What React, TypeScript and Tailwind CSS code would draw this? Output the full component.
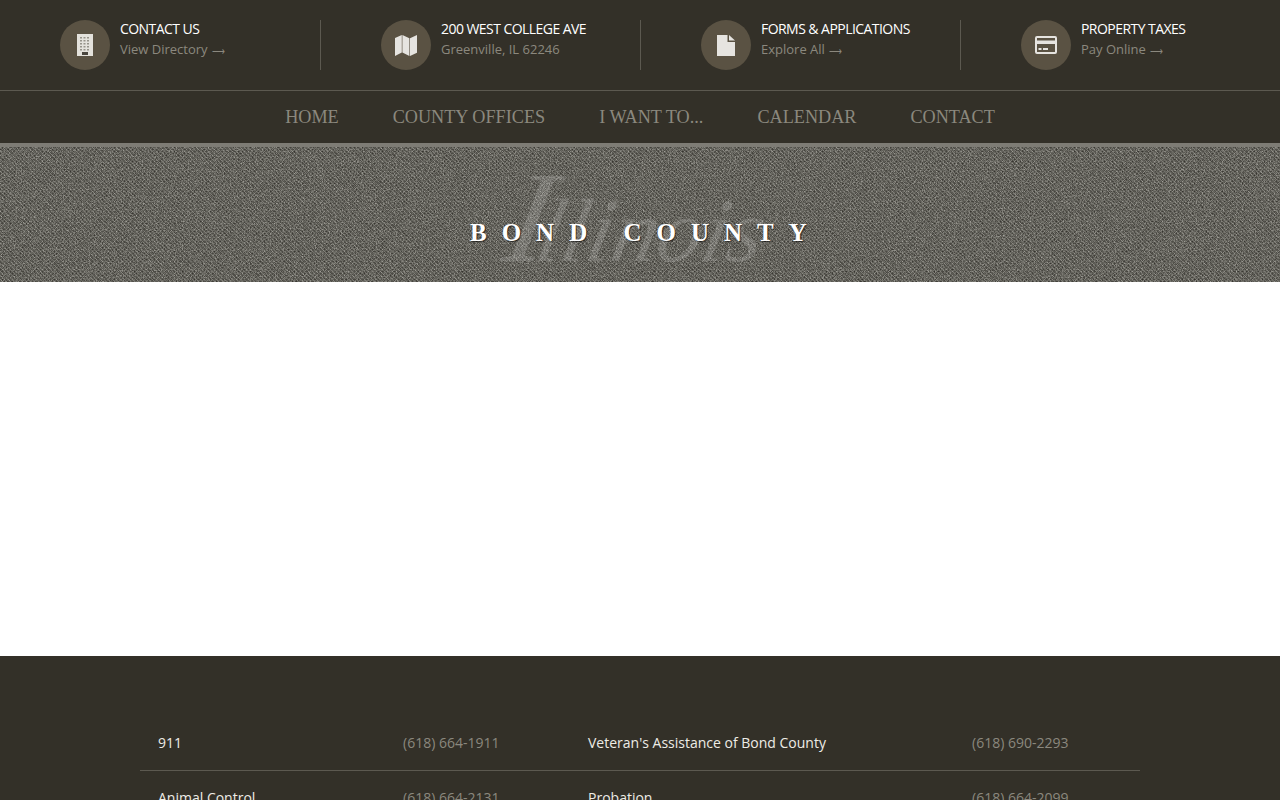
import React from "react";

const sans = "font-['Open_Sans',sans-serif]";

function BuildingIcon() {
  return (
    <svg width="16" height="22" viewBox="0 0 16 22">
      <rect x="0" y="0" width="16" height="22" fill="#e4e2dc" />
      {[3, 6, 9, 12, 15].map((y) =>
        [3, 6.5, 10].map((x) => <rect key={`${x}-${y}`} x={x} y={y} width="2" height="1.5" fill="#96938a" />),
      )}
      <rect x="5" y="18" width="6" height="3" fill="#4a463e" />
    </svg>
  );
}

function MapIcon() {
  return (
    <svg width="22" height="21" viewBox="0 0 22 21">
      <path d="M0 3 L6.8 0 V17.6 L0 21 Z M7.4 0 L14.4 3.2 V21 L7.4 17.6 Z M15 3.2 L22 0 V17.8 L15 21 Z" fill="#e6e4e0" />
    </svg>
  );
}

function FileIcon() {
  return (
    <svg width="18" height="21" viewBox="0 0 18 21">
      <path d="M0 0 H10.5 V7 H18 V21 H0 Z M12 0 L18 5.6 H12 Z" fill="#e6e4e0" />
    </svg>
  );
}

function CardIcon() {
  return (
    <svg width="22" height="18" viewBox="0 0 22 18">
      <path fillRule="evenodd" d="M2 0 H20 A2 2 0 0 1 22 2 V16 A2 2 0 0 1 20 18 H2 A2 2 0 0 1 0 16 V2 A2 2 0 0 1 2 0 Z M2 2 V4.5 H20 V2 Z M2 8 V16 H20 V8 Z" fill="#e6e4e0" />
      <rect x="3.5" y="12" width="3" height="2" fill="#e6e4e0" />
      <rect x="8" y="12" width="5" height="2" fill="#e6e4e0" />
    </svg>
  );
}

const items = [
  { title: "CONTACT US", sub: "View Directory", arrow: true, icon: <BuildingIcon /> },
  { title: "200 WEST COLLEGE AVE", sub: "Greenville, IL 62246", arrow: false, icon: <MapIcon /> },
  { title: "FORMS & APPLICATIONS", sub: "Explore All", arrow: true, icon: <FileIcon /> },
  { title: "PROPERTY TAXES", sub: "Pay Online", arrow: true, icon: <CardIcon /> },
];

const navItems = ["HOME", "COUNTY OFFICES", "I WANT TO...", "CALENDAR", "CONTACT"];

const rows = [
  ["911", "(618) 664-1911", "Veteran's Assistance of Bond County", "(618) 690-2293"],
  ["Animal Control", "(618) 664-2131", "Probation", "(618) 664-2099"],
];

function Texture() {
  return (
    <svg className="absolute inset-0 h-full w-full" aria-hidden="true">
      <defs>
        <pattern id="weave" width="4" height="4" patternUnits="userSpaceOnUse">
          <rect width="4" height="4" fill="#45433e" />
          <rect x="0" y="0" width="1" height="1" fill="#85837c" />
          <rect x="1" y="1" width="1" height="1" fill="#6f6d66" />
          <rect x="2" y="2" width="1" height="1" fill="#85837c" />
          <rect x="3" y="3" width="1" height="1" fill="#65635c" />
          <rect x="2" y="0" width="1" height="1" fill="#35332e" />
          <rect x="3" y="1" width="1" height="1" fill="#55534d" />
          <rect x="0" y="2" width="1" height="1" fill="#383631" />
          <rect x="1" y="3" width="1" height="1" fill="#4e4c46" />
        </pattern>
        <filter id="grain" x="0" y="0" width="100%" height="100%">
          <feTurbulence type="fractalNoise" baseFrequency="0.9" numOctaves="2" seed="4" />
          <feColorMatrix type="matrix" values="0 0 0 0 0.14  0 0 0 0 0.14  0 0 0 0 0.12  2.2 0 0 0 -0.7" />
        </filter>
        <filter id="grainLight" x="0" y="0" width="100%" height="100%">
          <feTurbulence type="fractalNoise" baseFrequency="0.85" numOctaves="2" seed="11" />
          <feColorMatrix type="matrix" values="0 0 0 0 0.55  0 0 0 0 0.54  0 0 0 0 0.5  0 1.6 0 0 -0.75" />
        </filter>
      </defs>
      <rect width="100%" height="100%" fill="url(#weave)" />
      <rect width="100%" height="100%" filter="url(#grain)" />
      <rect width="100%" height="100%" filter="url(#grainLight)" />
    </svg>
  );
}

export default function App() {
  return (
    <div className={`h-screen overflow-hidden bg-white ${sans}`}>
      <header className="bg-[#333028]">
        <div className="grid h-[90px] grid-cols-4 items-center">
          {items.map((it, i) => (
            <div key={it.title} className={`flex h-[50px] items-center gap-[10px] pl-[60px] ${i > 0 ? "border-l border-[#5c5950]" : ""}`}>
              <div className="flex h-[50px] w-[50px] shrink-0 items-center justify-center rounded-full bg-[#5a5243]">{it.icon}</div>
              <div className="flex flex-col pb-[12px]">
                <span className="text-[14px] leading-[20px] font-normal tracking-[-0.55px] text-white">{it.title}</span>
                <span className="h-[20px] text-[13px] leading-[20px] text-[#8b887e]">
                  {it.sub}
                  {it.arrow && <span className="ml-[4px] text-[9px] leading-[0]">⟶</span>}
                </span>
              </div>
            </div>
          ))}
        </div>
        <nav className="flex h-[53px] items-center justify-center gap-[54px] border-t border-[#5c5950] pt-[1px]">
          {navItems.map((n) => (
            <span key={n} className="font-['Liberation_Serif',serif] text-[18.2px] text-[#8b887e]">{n}</span>
          ))}
        </nav>
      </header>
      <div className="h-1 bg-[#7e7c75]" />
      <div className="relative flex h-[135px] items-center justify-center">
        <Texture />
        <span className="absolute top-[5px] left-[505px] -skew-x-12 font-['Liberation_Serif',serif] leading-[130px] whitespace-nowrap text-white/15 italic">
          <span className="text-[130px]">I</span>
          <span className="-ml-[10px] text-[90px]">llinois</span>
        </span>
        <span className="absolute top-[69px] left-[470px] font-['Liberation_Serif',serif] text-[25px] leading-[34px] font-bold tracking-[15px] whitespace-nowrap text-white [text-shadow:1px_1px_1px_rgba(0,0,0,0.6)]">BOND COUNTY</span>
      </div>
      <main className="h-[374px] bg-white" />
      <footer className="bg-[#333028] pt-[60px]">
        <div className="mx-auto w-[1000px]">
          {rows.map((r, i) => (
            <div key={r[0]} className={`grid h-[55px] grid-cols-[245px_185px_384px_186px] items-center pb-[2px] text-[14px] ${i === 0 ? "border-b border-[#5c5950]" : ""}`}>
              <span className="pl-[18px] text-[#eeece6]">{r[0]}</span>
              <span className="pl-[18px] text-[#8b887e]">{r[1]}</span>
              <span className="pl-[18px] text-[#eeece6]">{r[2]}</span>
              <span className="pl-[18px] text-[#8b887e]">{r[3]}</span>
            </div>
          ))}
        </div>
      </footer>
    </div>
  );
}
